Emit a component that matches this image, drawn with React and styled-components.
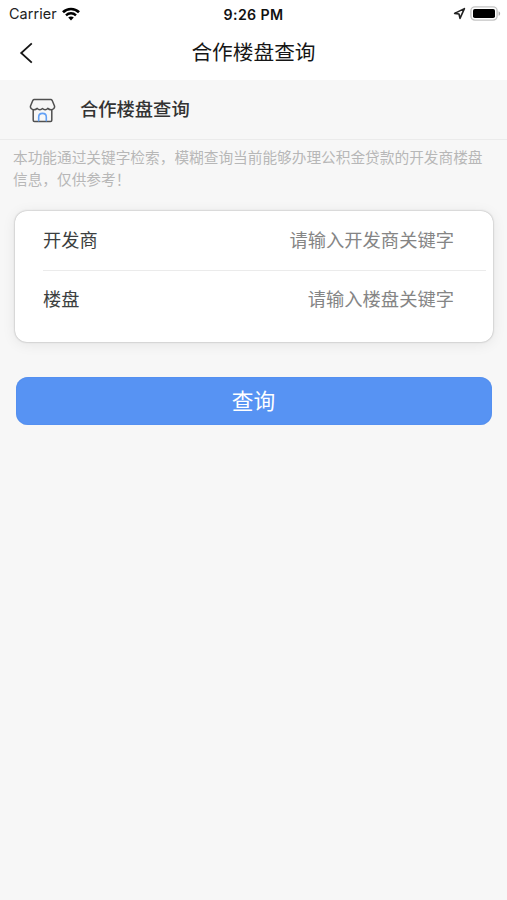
//Cooperative property search page.
import React from "react";
import styled, { createGlobalStyle, css } from "styled-components";

const appFontFamily = '"Noto Sans CJK SC", sans-serif';
const statusFontFamily = 'Inter, "Noto Sans CJK SC", sans-serif';
const pageColor = "#f7f7f7";
const mainColor = "#5793f3";

const GlobalStyle = createGlobalStyle`
	* {
		box-sizing: border-box;
	}
	body {
		margin: 0;
		background: ${pageColor};
		font-family: ${appFontFamily};
	}
`;

const stripFieldStyle = css`
	border: 0;
	padding: 0;
	margin: 0;
	outline: 0;
	background: none;
	font-family: inherit;
`;

const Page = styled.div`
	min-height: 900px;
	background: ${pageColor};
`;

const Header = styled.header`
	background: #fff;
	height: 80px;
`;

const StatusBar = styled.div`
	display: grid;
	grid-template-columns: 1fr auto 1fr;
	align-items: center;
	height: 27px;
	padding: 0 6px;
	font-family: ${statusFontFamily};
	line-height: 27px;
	color: #222;
`;

const StatusGroup = styled.div`
	display: flex;
	align-items: center;
	justify-content: ${props => (props.$end ? "flex-end" : "flex-start")};
	gap: ${props => (props.$end ? "4px" : "5px")};
	padding-left: ${props => (props.$end ? "0" : "3px")};
	svg {
		display: block;
	}
`;

const Carrier = styled.span`
	font-size: 14.4px;
	letter-spacing: 0.1px;
`;

const Clock = styled.span`
	padding-top: 2px;
	font-size: 14.2px;
	font-weight: 600;
	line-height: 25px;
	letter-spacing: 0.35px;
	color: #111;
`;

const NavBar = styled.nav`
	display: grid;
	grid-template-columns: 53px 1fr 53px;
	align-items: center;
	height: 51px;
`;

const BackButton = styled.button`
	${stripFieldStyle};
	display: flex;
	padding-left: 19px;
	cursor: pointer;
`;

const NavTitle = styled.h1`
	margin: 0;
	padding-bottom: 3px;
	font-size: 20.7px;
	font-weight: 400;
	line-height: 30px;
	text-align: center;
	color: #161616;
`;

const SectionHead = styled.div`
	display: flex;
	align-items: center;
	gap: 24px;
	height: 60px;
	padding: 1px 0 0 29px;
	border-bottom: 1px solid #ebebeb;
`;

const SectionTitle = styled.h2`
	margin: 0;
	padding-bottom: 4px;
	font-size: 18.3px;
	font-weight: 500;
	line-height: 28px;
	color: #333;
`;

const Hint = styled.p`
	margin: 0;
	padding: 6px 13px 0;
	font-size: 14.68px;
	line-height: 22px;
	color: #b7b7b7;
`;

const Card = styled.div`
	margin: 21px 14px 0 15px;
	height: 131px;
	padding-left: 28px;
	padding-right: 7px;
	background: #fff;
	border-radius: 12px;
	box-shadow: 0 0 2px rgba(0, 0, 0, 0.35), 0 2px 14px rgba(0, 0, 0, 0.08);
`;

const Field = styled.label`
	display: flex;
	align-items: center;
	justify-content: space-between;
	height: ${props => (props.$last ? "56px" : "60px")};
	padding-right: 32px;
	padding-bottom: ${props => (props.$last ? "2px" : "3px")};
	border-bottom: ${props => (props.$last ? "0" : "1px solid #ebebeb")};
`;

const FieldName = styled.span`
	font-size: 18.2px;
	line-height: 28px;
	color: #3c3f40;
`;

const FieldInput = styled.input`
	${stripFieldStyle};
	width: 260px;
	height: 28px;
	font-size: 18.3px;
	text-align: right;
	color: #333;
	&::placeholder {
		color: #858585;
		opacity: 1;
	}
`;

const SubmitButton = styled.button`
	${stripFieldStyle};
	display: block;
	width: 476px;
	height: 48px;
	margin: 35px auto 0 16px;
	padding: 0 1px 2px 0;
	border-radius: 12px;
	box-shadow: inset 0 0 1px #3c78dc;
	background: ${mainColor};
	font-size: 21.7px;
	line-height: 46px;
	text-align: center;
	color: #fff;
	cursor: pointer;
`;

const WifiIcon = () => (
	<svg width="18" height="14" viewBox="0 0 18 14" fill="none" stroke="#000">
		<path d="M1 5.2C5.4 0.9 12.6 0.9 17 5.2" strokeWidth="2.7" />
		<path d="M4 8.3C6.8 5.6 11.2 5.6 14 8.3" strokeWidth="2.4" />
		<path d="M9 13.4L6.2 10.6C7.8 9.2 10.2 9.2 11.8 10.6Z" fill="#000" stroke="none" />
	</svg>
);

const LocationIcon = () => (
	<svg width="13" height="13" viewBox="0 0 13 13" fill="none">
		<path d="M11.4 1.6L1.6 6.4L6 7L7 11.4Z" stroke="#222" strokeWidth="1.6" strokeLinejoin="round" />
	</svg>
);

const BatteryIcon = () => (
	<svg width="31" height="15" viewBox="0 0 31 15">
		<rect x="0.9" y="0.9" width="26.2" height="13.2" rx="4" fill="#fff" stroke="#c4c4c4" strokeWidth="1.4" />
		<rect x="3" y="3" width="22" height="9" rx="1.8" fill="#000" />
		<path d="M28.6 5.2C30.6 6 30.6 9 28.6 9.8Z" fill="#aaa" />
	</svg>
);

const BackIcon = () => (
	<svg width="15" height="22" viewBox="0 0 15 22" fill="none">
		<path d="M12.8 1.4L2.2 11L12.8 20.6" stroke="#161616" strokeWidth="1.8" />
	</svg>
);

const ShopIcon = () => (
	<svg width="27" height="25" viewBox="0 0 27 25" fill="none" strokeWidth="1.5" strokeLinejoin="round" strokeLinecap="round">
		<path
			d="M5.2 1.4H21.8C22.4 1.4 22.8 1.7 23.1 2.3L25.6 8.2C25.8 10.4 24 11.8 22 11.7C20.6 11.7 19.6 11.2 18.8 10.4C17.4 12.2 15 12.2 13.5 10.6C12 12.2 9.6 12.2 8.2 10.4C7.4 11.2 6.4 11.7 5 11.7C3 11.8 1.2 10.4 1.4 8.2L3.9 2.3C4.2 1.7 4.6 1.4 5.2 1.4Z"
			stroke="#505050"
		/>
		<path d="M4.2 12V22.2C4.2 23 4.6 23.4 5.4 23.4H21.6C22.4 23.4 22.8 23 22.8 22.2V12" stroke="#505050" />
		<path d="M9.7 22.8V19C9.7 14.2 17.3 14.2 17.3 19V22.8" stroke="#62a0f5" strokeWidth="1.6" />
	</svg>
);

const fields = [
	{ name: "开发商", placeholder: "请输入开发商关键字" },
	{ name: "楼盘", placeholder: "请输入楼盘关键字" }
];

const App = () => (
	<Page>
		<GlobalStyle />
		<Header>
			<StatusBar>
				<StatusGroup>
					<Carrier>Carrier</Carrier>
					<WifiIcon />
				</StatusGroup>
				<Clock>9:26 PM</Clock>
				<StatusGroup $end>
					<LocationIcon />
					<BatteryIcon />
				</StatusGroup>
			</StatusBar>
			<NavBar>
				<BackButton aria-label="返回">
					<BackIcon />
				</BackButton>
				<NavTitle>合作楼盘查询</NavTitle>
			</NavBar>
		</Header>
		<SectionHead>
			<ShopIcon />
			<SectionTitle>合作楼盘查询</SectionTitle>
		</SectionHead>
		<Hint>本功能通过关键字检索，模糊查询当前能够办理公积金贷款的开发商楼盘信息，仅供参考！</Hint>
		<Card>
			{fields.map((field, i) => (
				<Field key={field.name} $last={i === fields.length - 1}>
					<FieldName>{field.name}</FieldName>
					<FieldInput placeholder={field.placeholder} />
				</Field>
			))}
		</Card>
		<SubmitButton>查询</SubmitButton>
	</Page>
);

export default App;
